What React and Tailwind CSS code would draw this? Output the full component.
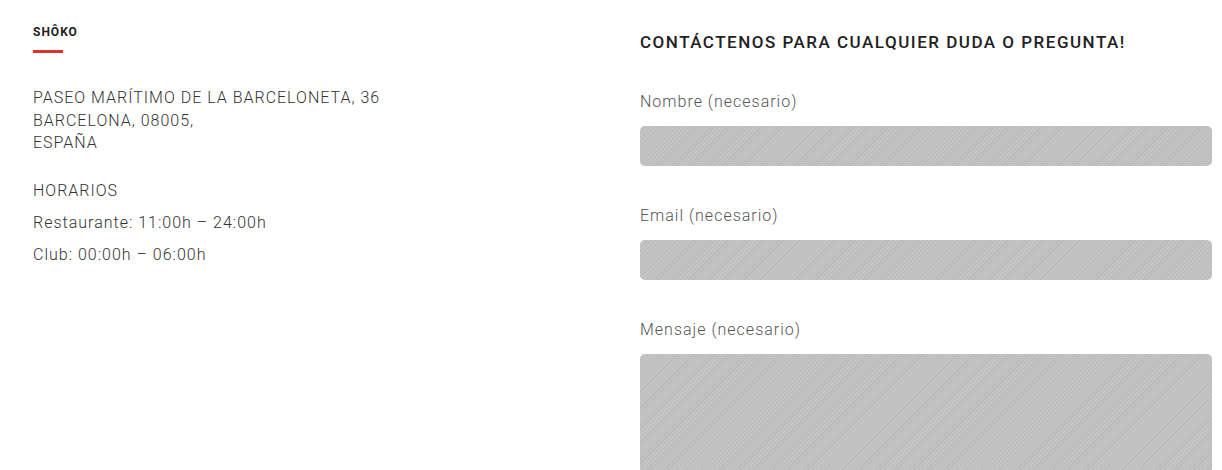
import React from 'react';

const stripes =
  'bg-[repeating-linear-gradient(135deg,#c3c3c3_0px,#c3c3c3_2px,#bbbbbb_2px,#bbbbbb_3px)]';

const Field = ({ label, tall }) => (
  <div className="flex flex-col">
    <label className="text-[16px] font-light tracking-[1px] text-[#555] leading-[22px]">{label}</label>
    <div className={`mt-[13px] w-full rounded-[5px] ${stripes} ${tall ? 'h-[160px]' : 'h-[40px]'}`}></div>
  </div>
);

const App = () => {
  return (
    <div className="w-[1222px] h-[470px] overflow-hidden bg-white flex font-['Roboto',sans-serif] text-[#333]">
      <div className="w-[640px] pl-[33px] pt-[25px]">
        <h4 className="text-[12px] font-bold tracking-[1px] text-[#222] leading-[14px]">SHÔKO</h4>
        <div className="mt-[11px] w-[30px] h-[3px] bg-[#e03131]"></div>
        <div className="mt-[34px] text-[16px] font-light tracking-[1px] leading-[22.5px]">
          PASEO MARÍTIMO DE LA BARCELONETA, 36
          <br />
          BARCELONA, 08005,
          <br />
          ESPAÑA
        </div>
        <div className="mt-[25px] text-[16px] font-light tracking-[1px] leading-[22px] flex flex-col gap-[10px]">
          <p>HORARIOS</p>
          <p>Restaurante: 11:00h – 24:00h</p>
          <p>Club: 00:00h – 06:00h</p>
        </div>
      </div>
      <div className="w-[572px] pt-[31px]">
        <h3 className="text-[17px] font-medium tracking-[1.5px] text-[#222] leading-[22px]">
          CONTÁCTENOS PARA CUALQUIER DUDA O PREGUNTA!
        </h3>
        <div className="mt-[38px] flex flex-col gap-[39px]">
          <Field label="Nombre (necesario)" />
          <Field label="Email (necesario)" />
          <Field label="Mensaje (necesario)" tall />
        </div>
      </div>
    </div>
  );
};

export default App;
